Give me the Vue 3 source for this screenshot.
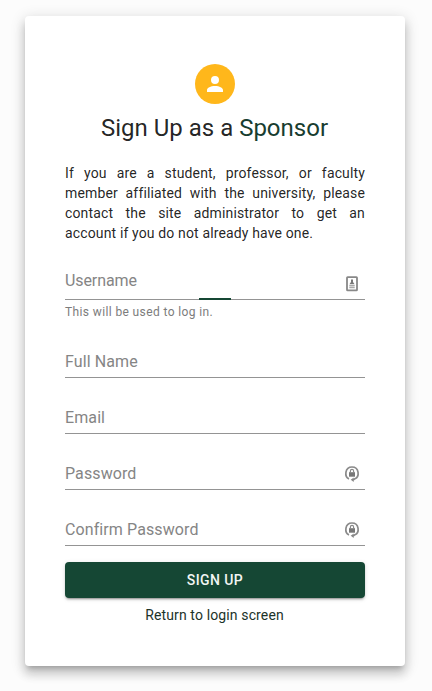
<script setup>
const fields = [
  { label: 'Username', hint: 'This will be used to log in.', icon: 'id', active: true },
  { label: 'Full Name' },
  { label: 'Email' },
  { label: 'Password', icon: 'lock' },
  { label: 'Confirm Password', icon: 'lock' },
]
</script>

<template>
  <main class="page">
    <form class="card" @submit.prevent>
      <div class="avatar">
        <svg viewBox="0 0 24 24" width="24" height="24"><path fill="#fff" d="M12 4a4 4 0 1 1 0 8 4 4 0 0 1 0-8m0 10c4.42 0 8 1.79 8 4v2H4v-2c0-2.21 3.58-4 8-4" /></svg>
      </div>
      <h1>Sign Up as a <span>Sponsor</span></h1>
      <p class="intro">If you are a student, professor, or faculty member affiliated with the university, please contact the site administrator to get an account if you do not already have one.</p>
      <div v-for="f in fields" :key="f.label" class="field" :class="{ active: f.active }">
        <div class="control">
          <label>{{ f.label }}</label>
          <svg v-if="f.icon === 'id'" class="icon" viewBox="0 0 16 16" width="16" height="16">
            <rect x="3" y="1.2" width="10" height="13.2" rx=".6" fill="none" stroke="#888" stroke-width="1.8" />
            <path d="M7 3.5h2v2.5l1.6 2.3H5.4L7 6z" fill="#777" />
            <path d="M5.3 9h5.4v1.1H5.3zM5.3 10.6h5.4v1.6H5.3z" fill="#aaa" />
          </svg>
          <svg v-if="f.icon === 'lock'" class="icon" viewBox="0 0 16 16" width="16" height="16">
            <path d="M5 12.9C.2 11 .7 1 8 1s7.8 9.5 2.9 11.8L9 14" fill="none" stroke="#8a8a8a" stroke-width="1.7" />
            <path d="M9.7 11.4V16l-3-2.2z" fill="#888" />
            <rect x="5" y="6.2" width="6" height="4.5" fill="#777" />
            <path d="M6.4 6.8V5a1.6 1.6 0 0 1 3.2 0v1.8" fill="none" stroke="#888" stroke-width="1.2" />
          </svg>
        </div>
        <div v-if="f.hint" class="hint">{{ f.hint }}</div>
      </div>
      <button type="submit">SIGN UP</button>
      <a class="return">Return to login screen</a>
    </form>
  </main>
</template>

<style>
body { background: #fcfcfc; }
</style>

<style scoped>
.page { box-sizing: border-box; height: 691px; padding: 16px 27px 25px 25px; font-family: Roboto, sans-serif; color: rgba(0,0,0,.87); background: #fcfcfc; overflow: hidden; }
.card { box-sizing: border-box; height: 650px; padding: 48px 40px; display: flex; flex-direction: column; background: #fff; border-radius: 4px; box-shadow: 0 5px 5px -3px rgba(0,0,0,.2), 0 8px 10px 1px rgba(0,0,0,.14), 0 3px 14px 2px rgba(0,0,0,.12); }
.avatar { width: 40px; height: 40px; border-radius: 50%; background: #ffb71b; display: flex; align-items: center; justify-content: center; align-self: center; flex: none; }
h1 { margin: 8px 1px 19px 0; font-size: 24px; line-height: 32px; font-weight: 400; text-align: center; white-space: nowrap; }
h1 span { color: #183d30; }
.intro { margin: 0 0 16px; font-size: 14px; line-height: 20px; letter-spacing: .14px; text-align: justify; }
.field { height: 56px; flex: none; }
.field.active { height: 78px; }
.control { box-sizing: border-box; height: 41px; padding-top: 15px; border-bottom: 1px solid #949494; display: flex; justify-content: space-between; }
.active .control { padding-top: 12px; background: linear-gradient(#154734, #154734) 134px 100% / 32px 2px no-repeat border-box; border-image: linear-gradient(90deg, #949494 134px, #154734 134px 166px, #949494 166px) 1; border-width: 0 0 1px; border-style: solid; }
label { font-size: 16px; line-height: 20px; letter-spacing: .1px; color: #858585; }
.active label { letter-spacing: -.1px; }
.icon { margin: 2px 5px 0 0; flex: none; }
.active .icon { margin-top: 5px; }
.hint { font-size: 12px; line-height: 14px; margin-top: 5px; letter-spacing: .38px; color: #7c7c7c; }
button { height: 36px; margin-top: 1px; flex: none; border: 0; border-radius: 4px; background: #154734; color: #f2f5f3; font: 500 14px/34px Roboto, sans-serif; letter-spacing: .4px; padding: 0 0 1px; box-shadow: 0 3px 1px -2px rgba(0,0,0,.2), 0 2px 2px rgba(0,0,0,.14), 0 1px 5px rgba(0,0,0,.12); }
.return { margin: 7px 1px 0 0; text-align: center; font-size: 14px; line-height: 20px; letter-spacing: .13px; color: #1c3329; }
</style>
